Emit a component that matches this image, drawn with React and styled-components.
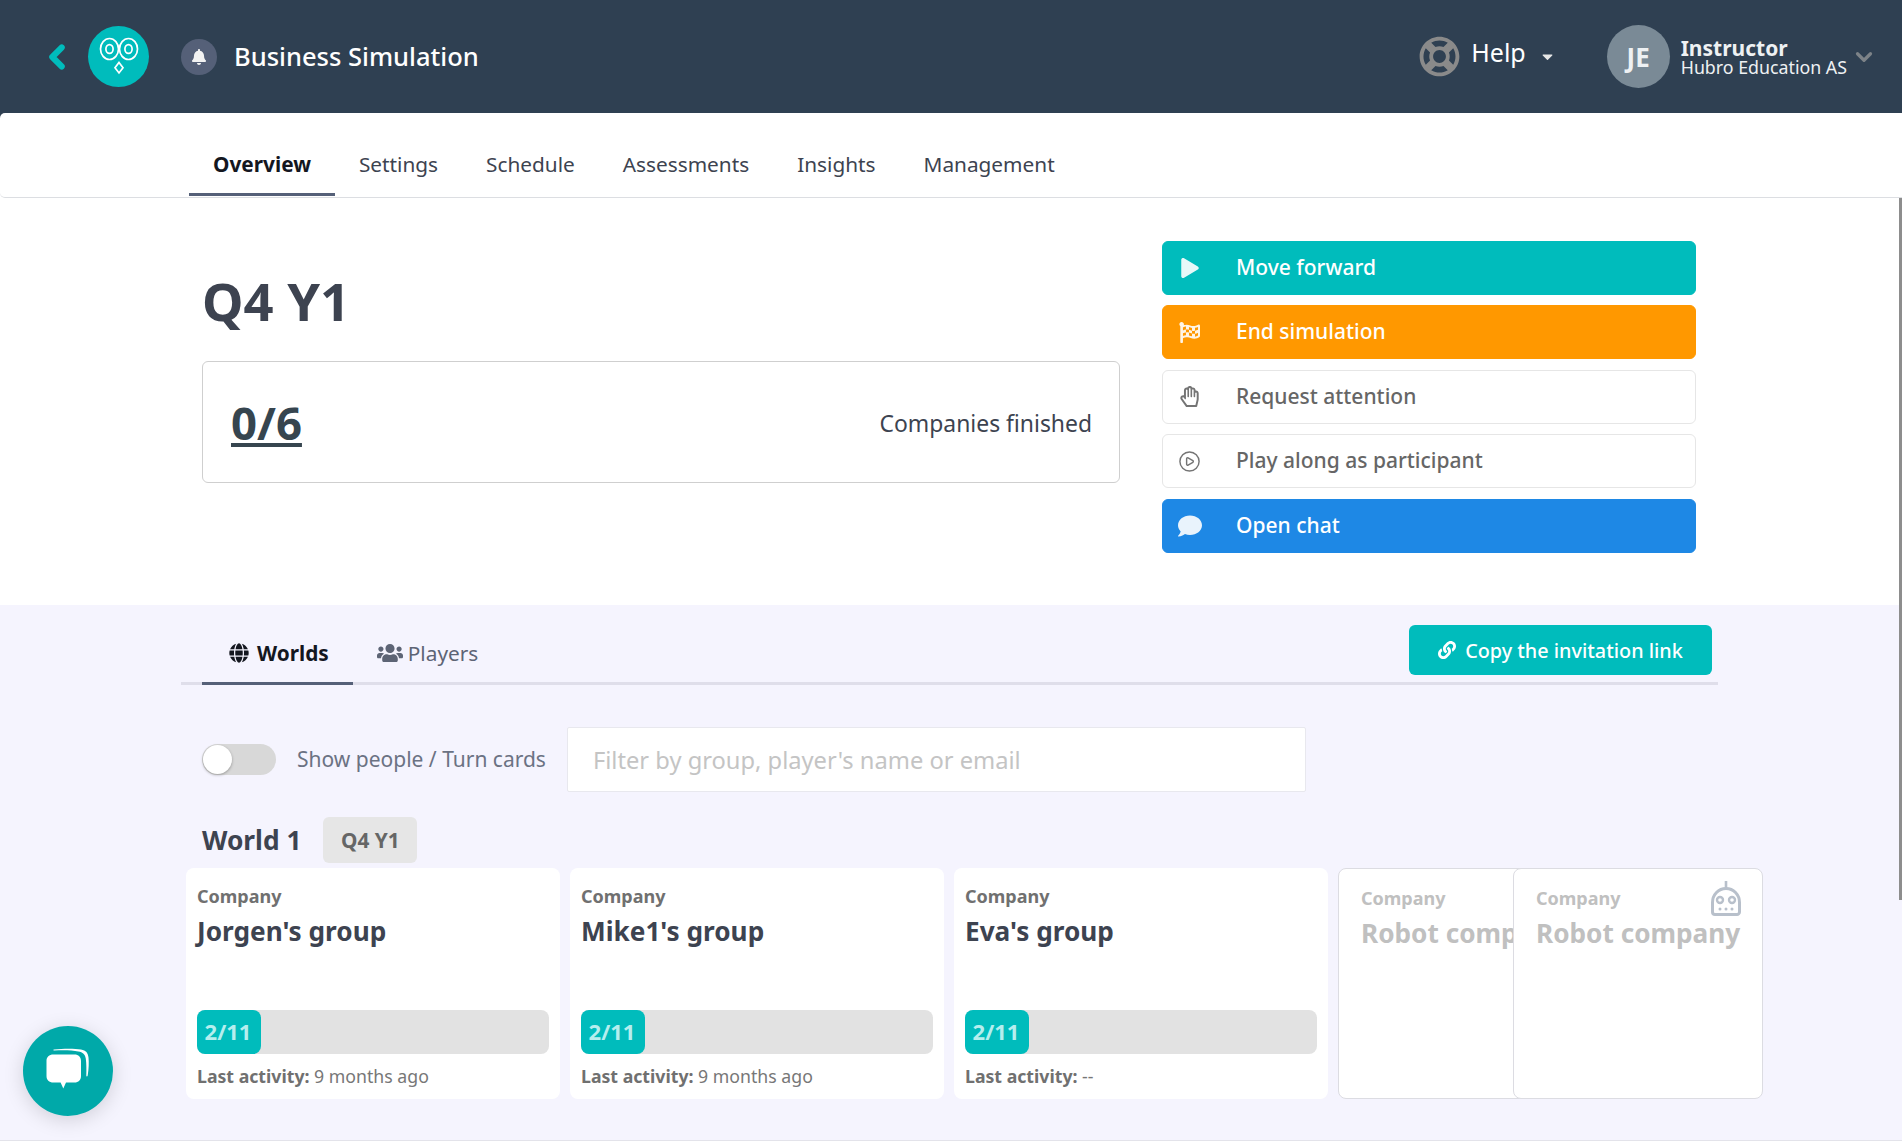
import React from 'react';
import styled, { createGlobalStyle } from 'styled-components';
import {
  FaBell,
  FaCaretDown,
  FaComment,
  FaFlagCheckered,
  FaGlobe,
  FaLink,
  FaPlay,
  FaRegHandPaper,
  FaRegLifeRing,
  FaUsers,
} from 'react-icons/fa';
import { ChevronDown, ChevronLeft, CirclePlay } from 'lucide-react';

const NAV_ITEMS = ['Overview', 'Settings', 'Schedule', 'Assessments', 'Insights', 'Management'];

const ACTIONS = [
  { label: 'Move forward', icon: <FaPlay size={20} />, bg: '#00bcbc' },
  { label: 'End simulation', icon: <FaFlagCheckered size={21} />, bg: '#ff9800' },
  { label: 'Request attention', icon: <FaRegHandPaper size={21} /> },
  { label: 'Play along as participant', icon: <CirclePlay size={23} strokeWidth={1.5} /> },
  { label: 'Open chat', icon: <FaComment size={24} />, bg: '#1e88e5' },
];

const COMPANIES = [
  { name: "Jorgen's group", done: '2/11', activity: '9 months ago' },
  { name: "Mike1's group", done: '2/11', activity: '9 months ago' },
  { name: "Eva's group", done: '2/11', activity: '--' },
];

const OwlLogo = () => (
  <svg width="40" height="44" viewBox="0 0 40 44" fill="none" stroke="#fff" strokeWidth="1.7">
    <ellipse cx="10.5" cy="14" rx="9" ry="10.5" />
    <ellipse cx="10.5" cy="14" rx="3.6" ry="4.4" />
    <ellipse cx="29.5" cy="14" rx="9" ry="10.5" />
    <ellipse cx="29.5" cy="14" rx="3.6" ry="4.4" />
    <path d="M20 27.5l4 5.2-4 5.2-4-5.2z" />
  </svg>
);

const RobotIcon = () => (
  <svg width="30" height="35" viewBox="0 0 30 35" fill="none">
    <path d="M15 0v8" stroke="#b8c0cb" strokeWidth="2.6" />
    <path
      d="M15 7.500c7.400 0 13.500 6 13.500 14V31a2.500 2.500 0 0 1-2.500 2.500H4A2.500 2.500 0 0 1 1.500 31v-9.500c0-8 6.100-14 13.500-14z"
      stroke="#b8c0cb"
      strokeWidth="3"
    />
    <circle cx="9" cy="19" r="3" stroke="#b8c0cb" strokeWidth="2.4" />
    <circle cx="21" cy="19" r="3" stroke="#b8c0cb" strokeWidth="2.4" />
    <circle cx="9" cy="28" r="1.500" fill="#b8c0cb" />
    <circle cx="15" cy="28" r="1.500" fill="#b8c0cb" />
    <circle cx="21" cy="28" r="1.500" fill="#b8c0cb" />
  </svg>
);

const ChatIcon = () => (
  <svg width="46" height="46" viewBox="0 0 46 46">
    <path
      d="M9 1.500c9-1 21-1 27 0 5 .8 7 3.500 7.500 8 .5 5 .3 11-.8 18-.2 1.200-1.300 1.400-1.400.2.2-6 .2-12-.5-17-.6-4.500-3-6.500-7.500-7.300C27.500 2.300 19 1.900 9 2.500c-1 0-1-.9 0-1z"
      fill="#fff"
    />
    <path
      d="M8.500 6.500h21c4 0 6.500 2.500 6.500 6.500v15c0 4-2.500 6.500-6.500 6.500H21l-2.700 6-2.700-6H8.500C4 34.500 1.500 32 1.500 28V13C1.500 9 4 6.500 8.500 6.500z"
      fill="#fff"
    />
  </svg>
);

const App = () => (
  <Page>
    <GlobalStyle />
    <Header>
      <BackLink>
        <ChevronLeft size={38} strokeWidth={3.8} />
      </BackLink>
      <Logo>
        <OwlLogo />
      </Logo>
      <BellBadge>
        <FaBell size={16} />
      </BellBadge>
      <AppTitle>Business Simulation</AppTitle>
      <HelpMenu>
        <FaRegLifeRing size={41} color='#8a8a8a' />
        <HelpLabel>Help</HelpLabel>
        <FaCaretDown size={17} color='#e6e6e6' />
      </HelpMenu>
      <UserMenu>
        <Avatar>JE</Avatar>
        <UserInfo>
          <UserRole>Instructor</UserRole>
          <UserOrg>Hubro Education AS</UserOrg>
        </UserInfo>
        <ChevronDown size={26} strokeWidth={3} color='#7d8388' />
      </UserMenu>
    </Header>

    <Nav>
      {NAV_ITEMS.map((item, i) => (
        <NavItem key={item} $active={i === 0}>
          {item}
        </NavItem>
      ))}
    </Nav>

    <Main>
      <Summary>
        <SummaryLeft>
          <Quarter>Q4 Y1</Quarter>
          <ProgressCard>
            <ProgressCount>0/6</ProgressCount>
            <ProgressLabel>Companies finished</ProgressLabel>
          </ProgressCard>
        </SummaryLeft>
        <Actions>
          {ACTIONS.map((action) => (
            <ActionButton key={action.label} $bg={action.bg}>
              <ActionIcon>{action.icon}</ActionIcon>
              <span>{action.label}</span>
            </ActionButton>
          ))}
        </Actions>
      </Summary>

      <Worlds>
        <TabBar>
          <Tab $active>
            <FaGlobe size={20} />
            Worlds
          </Tab>
          <Tab>
            <FaUsers size={26} />
            Players
          </Tab>
          <CopyButton>
            <FaLink size={18} />
            Copy the invitation link
          </CopyButton>
        </TabBar>

        <Toolbar>
          <Toggle>
            <Knob />
          </Toggle>
          <ToggleLabel>Show people / Turn cards</ToggleLabel>
          <FilterInput placeholder="Filter by group, player's name or email" />
        </Toolbar>

        <WorldRow>
          <WorldName>World 1</WorldName>
          <WorldBadge>Q4 Y1</WorldBadge>
        </WorldRow>

        <Cards>
          {COMPANIES.map((company) => (
            <CompanyCard key={company.name}>
              <CompanyLabel>Company</CompanyLabel>
              <CompanyName>{company.name}</CompanyName>
              <ProgressBar>
                <ProgressFill>{company.done}</ProgressFill>
              </ProgressBar>
              <Activity>
                <b>Last activity:</b> {company.activity}
              </Activity>
            </CompanyCard>
          ))}
          <RobotCard>
            <RobotBadge>
              <RobotIcon />
            </RobotBadge>
            <RobotLabel>Company</RobotLabel>
            <RobotName>Robot company</RobotName>
          </RobotCard>
          <RobotCard>
            <RobotBadge>
              <RobotIcon />
            </RobotBadge>
            <RobotLabel>Company</RobotLabel>
            <RobotName>Robot company</RobotName>
          </RobotCard>
        </Cards>
      </Worlds>
      <BelowFold />
    </Main>

    <ScrollThumb />
    <ChatBubble>
      <ChatIcon />
    </ChatBubble>
  </Page>
);

export default App;

const GlobalStyle = createGlobalStyle`
  * {
    box-sizing: border-box;
  }
  html, body {
    margin: 0;
    height: 100%;
    overflow: hidden;
    background: #fff;
  }
  body {
    font-family: 'Noto Sans', 'Open Sans', Arial, sans-serif;
    color: #3d4350;
  }
`;

const Page = styled.div`
  height: 100vh;
  display: flex;
  flex-direction: column;
  background: linear-gradient(#2f4052 150px, #fff 150px);
`;

const Header = styled.header`
  flex: 0 0 113px;
  display: flex;
  align-items: center;
  padding: 0 25px 0 38px;
  background: #2f4052;
`;

const BackLink = styled.a`
  display: flex;
  color: #00bcbc;
  margin-right: 12px;
`;

const Logo = styled.div`
  width: 61px;
  height: 61px;
  border-radius: 50%;
  background: #00bcbc;
  display: flex;
  align-items: center;
  justify-content: center;
  margin-right: 32px;
`;

const BellBadge = styled.div`
  width: 36px;
  height: 36px;
  border-radius: 50%;
  background: #556078;
  color: #f2f2f2;
  display: flex;
  align-items: center;
  justify-content: center;
  margin-right: 17px;
`;

const AppTitle = styled.h1`
  margin: 0 0 2px;
  font-size: 25.5px;
  font-weight: 500;
  color: #fff;
`;

const HelpMenu = styled.div`
  margin-left: auto;
  display: flex;
  align-items: center;
  color: #fff;
`;

const HelpLabel = styled.span`
  font-size: 25px;
  margin: 0 13px 10px 11px;
`;

const UserMenu = styled.div`
  display: flex;
  align-items: center;
  margin-left: 51px;
`;

const Avatar = styled.div`
  width: 63px;
  height: 63px;
  border-radius: 50%;
  background: #7a8a96;
  color: #eef1f3;
  font-size: 26px;
  font-weight: 700;
  display: flex;
  align-items: center;
  justify-content: center;
  margin-right: 11px;
`;

const UserInfo = styled.div`
  display: flex;
  flex-direction: column;
  margin-right: 4px;
  color: #eef1f3;
`;

const UserRole = styled.span`
  font-size: 21px;
  font-weight: 700;
  line-height: 21px;
`;

const UserOrg = styled.span`
  font-size: 17.8px;
  line-height: 17px;
`;

const Nav = styled.nav`
  flex: 0 0 85px;
  display: flex;
  align-items: flex-end;
  padding-left: 189px;
  background: #fff;
  border-bottom: 1px solid #dcdee2;
  border-radius: 5px 0 0 5px;
`;

const NavItem = styled.a`
  height: 61px;
  padding: 0 24px;
  display: flex;
  align-items: center;
  font-size: 20.8px;
  font-weight: ${(props) => (props.$active ? 700 : 400)};
  color: ${(props) => (props.$active ? '#14171f' : '#3d4350')};
  border-bottom: 3px solid ${(props) => (props.$active ? '#556078' : 'transparent')};
  margin-bottom: 1px;
`;

const Main = styled.main`
  flex: 1;
  min-height: 0;
  overflow: hidden;
  background: #fff;
`;

const ScrollThumb = styled.div`
  position: fixed;
  top: 198px;
  right: 0;
  width: 3px;
  height: 702px;
  background: #8d8d8d;
`;

const Summary = styled.section`
  height: 407px;
  display: flex;
  align-items: flex-start;
  padding: 42.5px 0 0 202px;
  background: #fff;
`;

const SummaryLeft = styled.div`
  width: 918px;
  margin-right: 42px;
`;

const Quarter = styled.h2`
  margin: 0;
  padding-top: 24.5px;
  font-size: 52.5px;
  line-height: 72px;
  font-weight: 700;
  color: #3d4350;
`;

const ProgressCard = styled.div`
  height: 122px;
  margin-top: 24px;
  display: flex;
  align-items: center;
  justify-content: space-between;
  padding: 0 27px 0 28px;
  border: 1px solid #cfcfcf;
  border-radius: 6px;
`;

const ProgressCount = styled.a`
  font-size: 45.5px;
  font-weight: 700;
  color: #36454f;
  text-decoration: underline;
`;

const ProgressLabel = styled.span`
  padding-top: 2px;
  font-size: 22.9px;
  color: #3d4350;
`;

const Actions = styled.div`
  width: 534px;
  display: flex;
  flex-direction: column;
  gap: 10.5px;
`;

const ActionButton = styled.button`
  height: 54px;
  display: flex;
  align-items: center;
  padding: 0;
  font-family: inherit;
  font-size: 21px;
  font-weight: 500;
  text-align: left;
  border-radius: 6px;
  border: 1px solid ${(props) => props.$bg || '#e6e6e6'};
  background: ${(props) => props.$bg || '#fff'};
  color: ${(props) => (props.$bg ? '#fff' : '#666')};

  span:last-child {
    padding-bottom: 2px;
  }
`;

const ActionIcon = styled.span`
  flex: 0 0 53px;
  margin-right: 20px;
  display: flex;
  justify-content: center;
  opacity: 0.9;
`;

const Worlds = styled.section`
  padding: 20px 0 41px;
  background: #f5f4fe;
  border-bottom: 1px solid #e3e3ea;
`;

const TabBar = styled.div`
  width: 1537px;
  height: 60px;
  margin-left: 181px;
  padding-left: 21px;
  display: flex;
  align-items: stretch;
  border-bottom: 3px solid #dfdeea;
`;

const Tab = styled.a`
  height: 60px;
  padding: 0 24px 2px ${(props) => (props.$active ? '27px' : '24px')};
  display: flex;
  align-items: center;
  gap: ${(props) => (props.$active ? '8px' : '5px')};
  font-size: 20.8px;
  font-weight: ${(props) => (props.$active ? 700 : 400)};
  color: ${(props) => (props.$active ? '#14171f' : '#5d6475')};
  border-bottom: 3px solid ${(props) => (props.$active ? '#556078' : 'transparent')};
`;

const CopyButton = styled.button`
  margin-left: auto;
  margin-right: 6px;
  height: 50px;
  width: 303px;
  display: flex;
  align-items: center;
  justify-content: center;
  gap: 9px;
  font-family: inherit;
  font-size: 19.8px;
  font-weight: 500;
  color: #fff;
  background: #00bcbc;
  border: none;
  border-radius: 6px;
`;

const Toolbar = styled.div`
  margin-top: 42px;
  padding-left: 202px;
  display: flex;
  align-items: center;
`;

const Toggle = styled.div`
  width: 74px;
  height: 31px;
  border-radius: 16px;
  background: #d8d8d8;
  padding: 1px;
`;

const Knob = styled.div`
  width: 29px;
  height: 29px;
  border-radius: 50%;
  background: #fff;
  box-shadow: 0 1px 3px rgba(0, 0, 0, 0.3);
`;

const ToggleLabel = styled.span`
  margin: 0 21px 2px 21px;
  font-size: 21px;
  color: #6b7283;
`;

const FilterInput = styled.input`
  width: 739px;
  height: 65px;
  padding: 0 25px;
  font-family: inherit;
  font-size: 23.7px;
  background: #fff;
  border: 1px solid #e8e8ee;
  border-radius: 2px;

  &::placeholder {
    color: #c4c4c4;
    opacity: 1;
  }
`;

const WorldRow = styled.div`
  margin-top: 25px;
  padding-left: 202px;
  display: flex;
  align-items: center;
  gap: 22px;
`;

const WorldName = styled.h3`
  margin: 0;
  font-size: 26.3px;
  font-weight: 700;
  color: #3d4350;
`;

const WorldBadge = styled.span`
  width: 94px;
  height: 46px;
  display: flex;
  align-items: center;
  justify-content: center;
  font-size: 20.8px;
  font-weight: 700;
  color: #666;
  background: #e6e6e6;
  border-radius: 6px;
`;

const Cards = styled.div`
  margin-top: 5px;
  padding-left: 186px;
  display: flex;
  gap: 10px;
`;

const CompanyCard = styled.article`
  flex: 0 0 374px;
  height: 231px;
  padding: 16px 11px 11px;
  display: flex;
  flex-direction: column;
  background: #fff;
  border-radius: 8px;
`;

const CompanyLabel = styled.div`
  font-size: 18px;
  line-height: 24px;
  font-weight: 700;
  color: #707070;
`;

const CompanyName = styled.div`
  margin-top: 5px;
  font-size: 26.2px;
  line-height: 36px;
  font-weight: 700;
  color: #3d4350;
  white-space: nowrap;
`;

const ProgressBar = styled.div`
  margin-top: auto;
  height: 44px;
  background: #e2e2e2;
  border-radius: 8px;
`;

const ProgressFill = styled.div`
  width: 64px;
  height: 44px;
  padding: 0 2px 2px 0;
  display: flex;
  align-items: center;
  justify-content: center;
  font-size: 22px;
  font-weight: 700;
  color: #b5eeee;
  background: #00bcbc;
  border-radius: 8px;
`;

const Activity = styled.div`
  margin-top: 10px;
  font-size: 17.7px;
  line-height: 24px;
  color: #777;
  white-space: nowrap;

  b {
    color: #707070;
  }
`;

const RobotCard = styled.article`
  position: relative;
  flex: 0 0 250px;
  height: 231px;
  padding: 17px 0 0 22px;
  background: #fff;
  border: 1px solid #dcdce2;
  border-radius: 8px;
  overflow: hidden;

  & + & {
    margin-left: -85px;
  }
`;

const RobotBadge = styled.div`
  position: absolute;
  top: 12px;
  right: 21px;
`;

const RobotLabel = styled(CompanyLabel)`
  color: #c0c0c0;
`;

const RobotName = styled(CompanyName)`
  color: #c0c0c0;
`;

const BelowFold = styled.div`
  height: 323px;
`;

const ChatBubble = styled.div`
  position: fixed;
  left: 23px;
  bottom: 26px;
  width: 90px;
  height: 90px;
  border-radius: 50%;
  background: #00a9a9;
  box-shadow: 0 4px 20px rgba(0, 0, 0, 0.15);
  display: flex;
  align-items: center;
  justify-content: center;
`;
